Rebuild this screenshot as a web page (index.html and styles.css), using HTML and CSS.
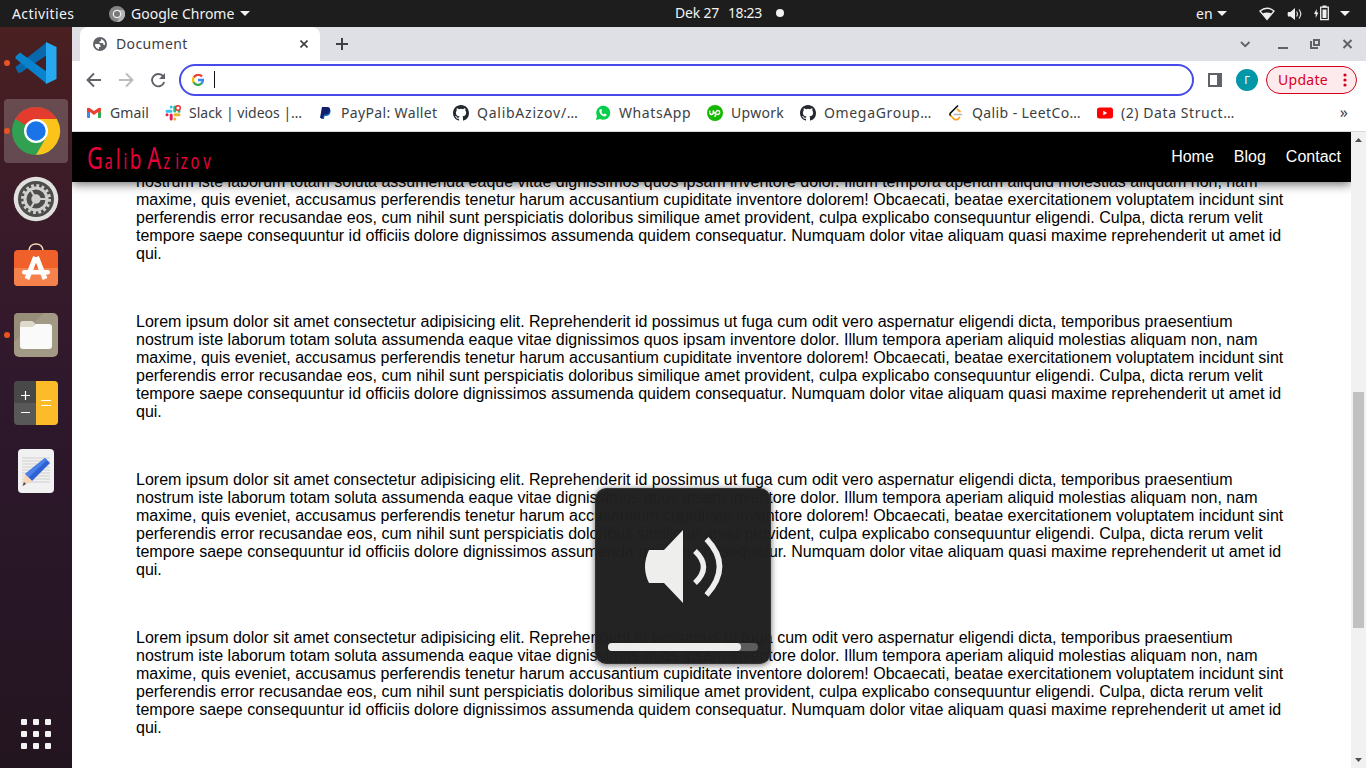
FILE: index.html
```html
<!DOCTYPE html>
<html lang="en">
<head>
<meta charset="utf-8">
<title>Document</title>
<link rel="stylesheet" href="styles.css">
</head>
<body>
<svg width="0" height="0" class="defs">
  <symbol id="github" viewBox="0 0 16 16"><path fill="#24292f" d="M8 0C3.58 0 0 3.58 0 8c0 3.54 2.29 6.53 5.47 7.59.4.07.55-.17.55-.38 0-.19-.01-.82-.01-1.49-2.01.37-2.53-.49-2.69-.94-.09-.23-.48-.94-.82-1.13-.28-.15-.68-.52-.01-.53.63-.01 1.08.58 1.23.82.72 1.21 1.87.87 2.33.66.07-.52.28-.87.51-1.07-1.78-.2-3.64-.89-3.64-3.95 0-.87.31-1.59.82-2.15-.08-.2-.36-1.02.08-2.12 0 0 .67-.21 2.2.82a7.6 7.6 0 0 1 4 0c1.53-1.04 2.2-.82 2.2-.82.44 1.1.16 1.92.08 2.12.51.56.82 1.27.82 2.15 0 3.07-1.87 3.75-3.65 3.95.29.25.54.73.54 1.48 0 1.07-.01 1.93-.01 2.2 0 .21.15.46.55.38A8 8 0 0 0 16 8c0-4.42-3.58-8-8-8z"/></symbol>
  <symbol id="down" viewBox="0 0 10 5"><path fill="#f2f2f2" d="M0 0h10L5 5z"/></symbol>
</svg>
<header class="topbar">
  <div class="top-left">
    <span class="t-act">Activities</span>
    <svg class="t-chrome" width="16" height="16" viewBox="0 0 16 16"><circle cx="8" cy="8" r="8" fill="#858585"/><path d="M8 4h7A8 8 0 0 1 8 16l3.400-6z" fill="#b5b5b5"/><circle cx="8" cy="8" r="4.300" fill="#eee"/><circle cx="8" cy="8" r="3" fill="#777"/></svg>
    <span class="t-app">Google Chrome</span>
    <svg width="10" height="5"><use href="#down"/></svg>
  </div>
  <div class="clock"><span>Dek 27</span><span>18:23</span><i></i></div>
  <div class="tray">
    <span class="t-en">en</span>
    <svg class="d1" width="10" height="5"><use href="#down"/></svg>
    <svg class="wifi" width="16" height="14" viewBox="0 0 16 14"><path d="M1 4Q8-1.500 15 4L8 12.500z" fill="none" stroke="#eee" stroke-width="1.300"/><path d="M3.500 6.500Q8 4.500 12.500 6.500L8 12.500z" fill="#eee"/></svg>
    <svg class="vol" width="16" height="14" viewBox="0 0 16 14"><path d="M1 5h2.500L8 1v12L3.500 9.500H1Q0 7 1 5z" fill="#eee"/><path d="M9.500 4.500q2 2.500 0 5M12 2.500q3.500 4.500 0 9" fill="none" stroke="#ddd" stroke-width="1.200"/></svg>
    <svg class="bat" width="15" height="16" viewBox="0 0 15 16"><path d="M2.700 4L0 9h1.700v4l2.700-5.500H2.700z" fill="#eee"/><path d="M6.700 2.200h7.600v12.500H6.700z" fill="none" stroke="#eee" stroke-width="1.300"/><path d="M8.500 .5h4v2h-4zM8.500 4.500h4V13h-4z" fill="#eee"/></svg>
    <svg width="10" height="5"><use href="#down"/></svg>
  </div>
</header>
<div class="desktop">
  <nav class="dock">
    <div class="app run"><svg width="44" height="44" viewBox="0 0 44 44"><path d="M1.500 26L33 1v13L7 31.500q-2 1-3.500-.5z" fill="#0868ab"/><path d="M1.500 15.500L6 11.500 33 31v12L1.500 17.500z" fill="#0a83cf"/><path d="M32 1l10.500 5v32L32 43z" fill="#27a9f2"/></svg></div>
    <div class="app run active"><svg width="48" height="48" viewBox="0 0 48 48"><circle cx="24" cy="24" r="24" fill="#31a050"/><path d="M24 24L3.200 12A24 24 0 0 1 44.800 12z" fill="#e33b2e"/><path d="M24 12h20.800A24 24 0 0 1 24 48l10.400-18z" fill="#fcc31b"/><circle cx="24" cy="24" r="12" fill="#fff"/><circle cx="24" cy="24" r="9.700" fill="#1a73e8"/></svg></div>
    <div class="app"><svg width="46" height="46" viewBox="0 0 46 46"><circle cx="23" cy="23" r="22.300" fill="#e0e0de"/><circle cx="23" cy="23" r="18" fill="#4d4d4b"/><circle cx="23" cy="23" r="13.500" fill="none" stroke="#d0d0ce" stroke-width="3" stroke-dasharray="2.800 2.501"/><circle cx="23" cy="23" r="11" fill="none" stroke="#d0d0ce" stroke-width="3"/><circle cx="23" cy="23" r="4.700" fill="#d0d0ce"/><path d="M23 23h11M23 23l-5.500-9.500M23 23l-5.500 9.500" stroke="#d0d0ce" stroke-width="2"/></svg></div>
    <div class="app"><svg width="46" height="46" viewBox="0 4 46 46"><path d="M16 11V9q1-6 7-6t7 6v2" transform="translate(0 1)" fill="none" stroke="#f3dab5" stroke-width="1.500"/><rect x="1" y="10" width="44" height="36" rx="4" fill="#f0602a"/><path d="M1 28h44v14q0 4-4 4H5q-4 0-4-4z" fill="#f5814c"/><path d="M22.500 17L14 39M23.500 17L32 39" stroke="#fff" stroke-width="5"/><rect x="9" y="30" width="28" height="4.500" rx="2.200" fill="#fff"/></svg></div>
    <div class="app run"><svg width="46" height="46" viewBox="0 0 46 46"><rect x="1" y="1" width="44" height="44" rx="5" fill="#a29a85"/><path d="M5 1h26L1 30V5q0-4 4-4z" fill="#968e79"/><path d="M7 12q0-3 3-3h8q3 0 4 3h13v5H7z" fill="#dedacb"/><path d="M7 15h12q2 0 4-3h13q3 0 3 3v19q0 3-3 3H10q-3 0-3-3z" fill="#fafafa"/></svg></div>
    <div class="app"><svg width="46" height="46" viewBox="0 0 46 46"><rect x="1" y="1" width="44" height="44" rx="4" fill="#585858"/><path d="M1 23V5q0-4 4-4h18v22z" fill="#484848"/><path d="M23 1h18q4 0 4 4v36q0 4-4 4H23z" fill="#fcbb29"/><path d="M8 15.500h9M12.500 11v9M8 32.500h9M28 20.500h10M28 25.500h10" stroke="#fff" stroke-width="1.200"/></svg></div>
    <div class="app"><svg width="46" height="46" viewBox="0 0 46 46"><rect x="5" y="1" width="36" height="44" rx="4" fill="#f1f1f1"/><path d="M9 10h28M9 13h28M9 16h28M9 19h28M9 22h28M9 25h28M9 28h28M9 31h28M9 34h28" stroke="#cfcfcf"/><path d="M32 10l5 5-18 18-7-7z" fill="#2e62d3"/><path d="M32 10l2 2-19 18-3-4z" fill="#4a80e9"/><path d="M12 26l7 7-9.500 5z" fill="#f7d5b5"/><path d="M11 34l2 2-3.500 2z" fill="#444"/></svg></div>
    <svg class="grid" width="30" height="30" viewBox="0 0 30 30" fill="#f2f2f2"><rect width="6" height="6" rx="1"/><rect x="12" width="6" height="6" rx="1"/><rect x="24" width="6" height="6" rx="1"/><rect y="12" width="6" height="6" rx="1"/><rect x="12" y="12" width="6" height="6" rx="1"/><rect x="24" y="12" width="6" height="6" rx="1"/><rect y="24" width="6" height="6" rx="1"/><rect x="12" y="24" width="6" height="6" rx="1"/><rect x="24" y="24" width="6" height="6" rx="1"/></svg>
  </nav>
  <div class="browser">
    <div class="tabs">
      <div class="tab">
        <svg width="14" height="14" viewBox="0 0 14 14"><circle cx="7" cy="7" r="7" fill="#5f6368"/><path d="M2 7h3.500q2 0 2 2v1H6v2.200Q2 11.500 2 7zM8 2v1.500q0 1-1.500 1V6h3q1 0 1 2H12q.5-4.500-4-6z" fill="#fff"/></svg>
        <span>Document</span>
        <svg class="x" width="8" height="8" viewBox="0 0 8 8"><path d="M.5.5l7 7M7.500.5l-7 7" stroke="#3c4043" stroke-width="1.600"/></svg>
      </div>
      <svg class="plus" width="12" height="12" viewBox="0 0 12 12"><path d="M6 0v12M0 6h12" stroke="#3c4043" stroke-width="2"/></svg>
      <svg class="win" width="112" height="12" viewBox="0 0 112 12" fill="none" stroke="#5f6368"><path d="M1 4l4.200 4.200L9.500 4" stroke-width="1.800"/><path d="M38 10h10" stroke-width="2"/><path d="M74 2h5v5h-5zM71 3v7h7" stroke-width="2"/><path d="M103.500 2l8 8M111.500 2l-8 8" stroke-width="2"/></svg>
    </div>
    <div class="toolbar">
      <svg class="navicons" width="80" height="16" viewBox="0 0 80 16" fill="none" stroke="#5f6368" stroke-width="1.900"><path d="M15 8H2M8 1.500L1.500 8 8 14.500"/><path d="M33 8h13M40 1.500L46.500 8 40 14.500" stroke="#babcbe"/><path d="M77.300 4.500A6.200 6.200 0 1 0 78.200 10"/><path d="M79 1v6h-6z" fill="#5f6368" stroke="none"/></svg>
      <div class="omni">
        <svg width="12" height="12" viewBox="0 0 12 12" fill="none" stroke-width="2.300"><path d="M10 2.600A5 5 0 0 0 1.700 3.600" stroke="#ea4335"/><path d="M1.700 3.500A5 5 0 0 0 1.700 8.500" stroke="#fbbc05"/><path d="M1.600 8.300A5 5 0 0 0 9.500 9.500" stroke="#34a853"/><path d="M6 6h5A5 5 0 0 1 9.300 9.600" stroke="#4285f4"/></svg><i></i>
      </div>
      <svg class="panel" width="14" height="14" viewBox="0 0 14 14"><path d="M1 1h12v12H1z" fill="none" stroke="#5f6368" stroke-width="2"/><path d="M9 0h5v14H9z" fill="#5f6368"/></svg>
      <div class="avatar">Г</div>
      <div class="update"><span>Update</span><svg width="4" height="14" fill="#d5001c"><circle cx="2" cy="2" r="1.600"/><circle cx="2" cy="7" r="1.600"/><circle cx="2" cy="12" r="1.600"/></svg></div>
    </div>
    <div class="bookmarks">
      <svg width="16" height="16" viewBox="0 0 16 16"><path d="M1 3h3v10H2q-1 0-1-1z" fill="#4285f4"/><path d="M12 3h3v9q0 1-1 1h-2z" fill="#34a853"/><path d="M12 3h3v3l-3 2z" fill="#fbbc04"/><path d="M1 3.500q1-1.500 3-.3L8 6l4-2.800Q14 2 15 3.500V6l-3 2.300V7L8 10 4 7v1.300L1 6z" fill="#ea4335"/></svg><span class="b1">Gmail</span>
      <svg width="16" height="16" viewBox="0 0 16 16" stroke-width="3" stroke-linecap="round"><path d="M2 6.200h4M6.200 2v.1" stroke="#36c5f0"/><path d="M9.800 2v4M14 6.200h.1" stroke="#2eb67d"/><path d="M10 9.800h4M9.800 14v.1" stroke="#ecb22e"/><path d="M6.200 10v4M2 9.800h.1" stroke="#e01e5a"/><circle cx="13" cy="3" r="2.300" fill="#fff" stroke="#e33" stroke-width="1.500"/></svg><span class="b2">Slack | videos |…</span>
      <svg width="16" height="16" viewBox="0 0 16 16"><path d="M5 3h6q3 .5 2.500 4-.7 4-4.500 4H7.500L7 14H4z" fill="#1070b8"/><path d="M5 2h6q2.500.6 2 3.500-.7 4-4.500 4H7L6 13H3z" fill="#10206e"/></svg><span class="b3">PayPal: Wallet</span>
      <svg width="16" height="16"><use href="#github"/></svg><span class="b4">QalibAzizov/…</span>
      <svg width="16" height="16" viewBox="0 0 16 16"><path d="M1 15l1-4A7 7 0 1 1 5 14z" fill="#07cf4c"/><path d="M5 4l1.500.3L7 6l-.7 1q1 1.800 2.500 2.500l1-.9 2 1q-.4 2-2.300 2Q5 10.500 4.300 6q0-1.300.7-2z" fill="#fff"/></svg><span class="b5">WhatsApp</span>
      <svg width="16" height="16" viewBox="0 0 16 16"><circle cx="8" cy="8" r="8" fill="#14b800"/><path d="M2.800 5.500v2q0 2 1.700 2T6.200 7.500v-2q1.500 4 4 4 2.500 0 2.500-2T10.500 5.500Q8.700 5.500 8 12" fill="none" stroke="#fff" stroke-width="1.300"/></svg><span class="b6">Upwork</span>
      <svg width="16" height="16"><use href="#github"/></svg><span class="b7">OmegaGroup…</span>
      <svg width="16" height="16" viewBox="0 0 16 16" fill="none" stroke-width="1.700" stroke-linecap="round"><path d="M6.500 9.500h7" stroke="#b3b3b3"/><path d="M9.500 1L2.500 8q-1 1.300 0 2.500" stroke="#111"/><path d="M12 6.500L9.500 4.500M3 11l3 3q2 1.500 4 0l1.500-1.500" stroke="#ffa116"/></svg><span class="b8">Qalib - LeetCo…</span>
      <svg width="16" height="16" viewBox="0 0 16 16"><rect y="2.500" width="16" height="11" rx="2.500" fill="#f00"/><path d="M6.300 5.800v4.400L10.200 8z" fill="#fff"/></svg><span class="b9">(2) Data Struct…</span>
      <span class="more">»</span>
    </div>
    <div class="viewport">
      <div class="page">
        <div class="site-head">
          <svg class="logo" width="130" height="40" viewBox="0 0 130 40"><g transform="scale(.7 1)"><text y="32" x="0 25 41 52 61 80 86 109 126 134 148 166"><tspan class="cap">G</tspan><tspan>a</tspan><tspan class="tall">l</tspan><tspan>i</tspan><tspan class="tall">b</tspan> <tspan class="cap">A</tspan><tspan>zizov</tspan></text></g></svg>
          <nav><a>Home</a><a>Blog</a><a>Contact</a></nav>
        </div>
        <main>
          <p>nostrum iste laborum totam soluta assumenda eaque vitae dignissimos quos ipsam inventore dolor. Illum tempora aperiam aliquid molestias aliquam non, nam maxime, quis eveniet, accusamus perferendis tenetur harum accusantium cupiditate inventore dolorem! Obcaecati, beatae exercitationem voluptatem incidunt sint perferendis error recusandae eos, cum nihil sunt perspiciatis doloribus similique amet provident, culpa explicabo consequuntur eligendi. Culpa, dicta rerum velit tempore saepe consequuntur id officiis dolore dignissimos assumenda quidem consequatur. Numquam dolor vitae aliquam quasi maxime reprehenderit ut amet id qui.</p>
          <p>Lorem ipsum dolor sit amet consectetur adipisicing elit. Reprehenderit id possimus ut fuga cum odit vero aspernatur eligendi dicta, temporibus praesentium nostrum iste laborum totam soluta assumenda eaque vitae dignissimos quos ipsam inventore dolor. Illum tempora aperiam aliquid molestias aliquam non, nam maxime, quis eveniet, accusamus perferendis tenetur harum accusantium cupiditate inventore dolorem! Obcaecati, beatae exercitationem voluptatem incidunt sint perferendis error recusandae eos, cum nihil sunt perspiciatis doloribus similique amet provident, culpa explicabo consequuntur eligendi. Culpa, dicta rerum velit tempore saepe consequuntur id officiis dolore dignissimos assumenda quidem consequatur. Numquam dolor vitae aliquam quasi maxime reprehenderit ut amet id qui.</p>
          <p>Lorem ipsum dolor sit amet consectetur adipisicing elit. Reprehenderit id possimus ut fuga cum odit vero aspernatur eligendi dicta, temporibus praesentium nostrum iste laborum totam soluta assumenda eaque vitae dignissimos quos ipsam inventore dolor. Illum tempora aperiam aliquid molestias aliquam non, nam maxime, quis eveniet, accusamus perferendis tenetur harum accusantium cupiditate inventore dolorem! Obcaecati, beatae exercitationem voluptatem incidunt sint perferendis error recusandae eos, cum nihil sunt perspiciatis doloribus similique amet provident, culpa explicabo consequuntur eligendi. Culpa, dicta rerum velit tempore saepe consequuntur id officiis dolore dignissimos assumenda quidem consequatur. Numquam dolor vitae aliquam quasi maxime reprehenderit ut amet id qui.</p>
          <p>Lorem ipsum dolor sit amet consectetur adipisicing elit. Reprehenderit id possimus ut fuga cum odit vero aspernatur eligendi dicta, temporibus praesentium nostrum iste laborum totam soluta assumenda eaque vitae dignissimos quos ipsam inventore dolor. Illum tempora aperiam aliquid molestias aliquam non, nam maxime, quis eveniet, accusamus perferendis tenetur harum accusantium cupiditate inventore dolorem! Obcaecati, beatae exercitationem voluptatem incidunt sint perferendis error recusandae eos, cum nihil sunt perspiciatis doloribus similique amet provident, culpa explicabo consequuntur eligendi. Culpa, dicta rerum velit tempore saepe consequuntur id officiis dolore dignissimos assumenda quidem consequatur. Numquam dolor vitae aliquam quasi maxime reprehenderit ut amet id qui.</p>
        </main>
      </div>
      <div class="scroll"><svg width="7" height="4"><path d="M3.500 0L7 4H0z" fill="#505050"/></svg><div class="thumb"></div><svg width="7" height="4"><path d="M0 0h7L3.500 4z" fill="#505050"/></svg></div>
    </div>
  </div>
</div>
<div class="osd">
  <svg width="80" height="76" viewBox="0 0 80 76"><path d="M5 22h15L39 2v73L20 55H5Q-3 39 5 22z" fill="#eeeeec"/><path d="M51 23q17 16 0 32M62.500 11q26 27 0 56" fill="none" stroke="#eeeeec" stroke-width="5.500"/></svg>
  <div class="level"><div></div></div>
</div>
</body>
</html>
```
FILE: styles.css
```css
* { box-sizing: border-box; }
body { margin: 0; width: 1366px; height: 768px; overflow: hidden; display: flex; flex-direction: column; font-family: "Noto Sans", sans-serif; background: #fff; }
svg { display: block; flex: none; }
.defs { position: absolute; }
.topbar { height: 27px; flex: none; background: #1d1d1d; color: #f2f2f2; display: grid; grid-template-columns: 675px 1fr 170px; align-items: center; font-size: 14px; line-height: 27px; white-space: nowrap; }
.top-left, .clock, .tray { display: flex; align-items: center; }
.top-left { padding-left: 12px; }
.t-act { width: 97px; letter-spacing: .4px; }
.t-app { width: 109px; margin-left: 6px; }
.clock { line-height: 26px; padding-bottom: 1px; }
.clock span:first-child { width: 53px; letter-spacing: -.2px; }
.clock span:nth-child(2) { width: 48px; letter-spacing: -.4px; }
.clock i { width: 8px; height: 8px; border-radius: 4px; background: #f2f2f2; }
.t-en { width: 19px; }
.d1 { margin-left: 2px; }
.wifi { margin-left: 32px; }
.vol { margin-left: 12px; }
.bat { margin: 0 11px 2px 11px; }
.desktop { flex: 1; display: flex; min-height: 0; }
.dock { width: 72px; background: linear-gradient(#4a2021 0, #3a1b29 25%, #2e182c 50%, #271625 80%, #231520 100%); display: flex; flex-direction: column; align-items: center; gap: 4px; padding: 4px 0 19px; }
.app { width: 64px; height: 64px; display: grid; place-items: center; border-radius: 4px; position: relative; }
.app svg { overflow: visible; }
.active { background: rgba(255,255,255,.2); }
.run::before { content: ""; position: absolute; left: 0; top: 29px; width: 6px; height: 6px; border-radius: 3px; background: #e95420; }
.grid { margin-top: auto; }
.browser { flex: 1; min-width: 0; display: flex; flex-direction: column; color: #3c4043; }
.tabs { height: 34px; background: #dee0e5; display: flex; align-items: center; padding-left: 8px; padding-right: 14px; }
.tab { width: 240px; height: 34px; background: #fff; border-radius: 8px 8px 0 0; display: flex; align-items: center; padding: 0 12px 0 13px; font-size: 14px; }
.tab span { margin-left: 9px; letter-spacing: .35px; padding-bottom: 2px; }
.x { margin-left: auto; }
.plus { margin-left: 16px; }
.win { margin-left: auto; }
.toolbar { height: 38px; display: flex; align-items: center; padding-left: 14px; }
.omni { width: 1015px; height: 32px; border: 2px solid #474bea; border-radius: 16px; margin-left: 13px; display: flex; align-items: center; padding-left: 11px; }
.omni i { width: 1px; height: 17px; margin-left: 10px; margin-bottom: 1px; background: #111; }
.panel { margin-left: 14px; }
.avatar { width: 22px; height: 22px; border-radius: 50%; background: #0097a7; color: #fff; margin-left: 14px; font-size: 11px; line-height: 22px; text-align: center; }
.update { width: 91px; height: 28px; border: 1px solid #d5001c; border-radius: 14px; margin-left: 8px; background: #fdeaec; color: #d5001c; display: flex; align-items: center; padding-left: 11px; font-size: 14px; }
.update span { width: 65px; letter-spacing: .3px; padding-bottom: 2px; }
.bookmarks { height: 33px; border-bottom: 1px solid #d6d8dc; display: flex; align-items: center; padding: 0 18px 5px 14px; font-size: 14px; white-space: nowrap; }
.bookmarks span { margin: 0 16px 0 8px; flex: none; }
.bookmarks .b1 { width: 39px; letter-spacing: .15px; }
.bookmarks .b2 { width: 112px; }
.bookmarks .b3 { width: 96px; letter-spacing: .35px; }
.bookmarks .b4 { width: 102px; letter-spacing: .75px; }
.bookmarks .b5 { width: 72px; letter-spacing: .6px; }
.bookmarks .b6 { width: 53px; letter-spacing: .3px; }
.bookmarks .b7 { width: 108px; letter-spacing: .65px; }
.bookmarks .b8 { width: 109px; letter-spacing: .4px; }
.bookmarks .b9 { width: 113px; letter-spacing: .57px; }
.bookmarks .more { margin: 0 0 0 auto; font-size: 16px; padding-bottom: 2px; }
.viewport { flex: 1; min-height: 0; display: flex; }
.page { width: 1279px; overflow: hidden; font-family: "Liberation Sans", Arial, sans-serif; font-size: 16px; line-height: 18px; color: #000; }
.site-head { height: 50px; background: #000; position: relative; z-index: 1; box-shadow: 0 2px 10px rgba(0,0,0,.6); display: flex; justify-content: space-between; align-items: center; padding: 0 10px 0 15px; }
.site-head nav { display: flex; gap: 20px; color: #fff; }
.logo { overflow: visible; }
.logo text { fill: #e6003c; font-family: "Noto Sans", sans-serif; font-size: 21px; }
.logo .cap { font-size: 31px; }
.logo .tall { font-size: 27px; }
main { margin-top: -9px; padding: 0 64px; }
main p { margin: 0 0 50px; }
.scroll { width: 15px; background: #f1f1f1; display: flex; flex-direction: column; align-items: center; padding: 6px 0; }
.thumb { width: 11px; height: 236px; margin-top: 250px; margin-bottom: auto; background: #c1c1c1; }
.osd { position: absolute; left: 595px; top: 488px; width: 176px; height: 176px; border-radius: 11px; background: rgba(32,32,32,.985); border: 1px solid #333; box-shadow: 0 1px 6px rgba(0,0,0,.6); display: flex; flex-direction: column; padding: 39px 12px 12px; }
.osd svg { margin-left: 36px; }
.level { height: 8px; border-radius: 4px; background: #5c5c5c; margin-top: auto; }
.level div { width: 133px; height: 8px; border-radius: 4px; background: #eeeeec; }
```
